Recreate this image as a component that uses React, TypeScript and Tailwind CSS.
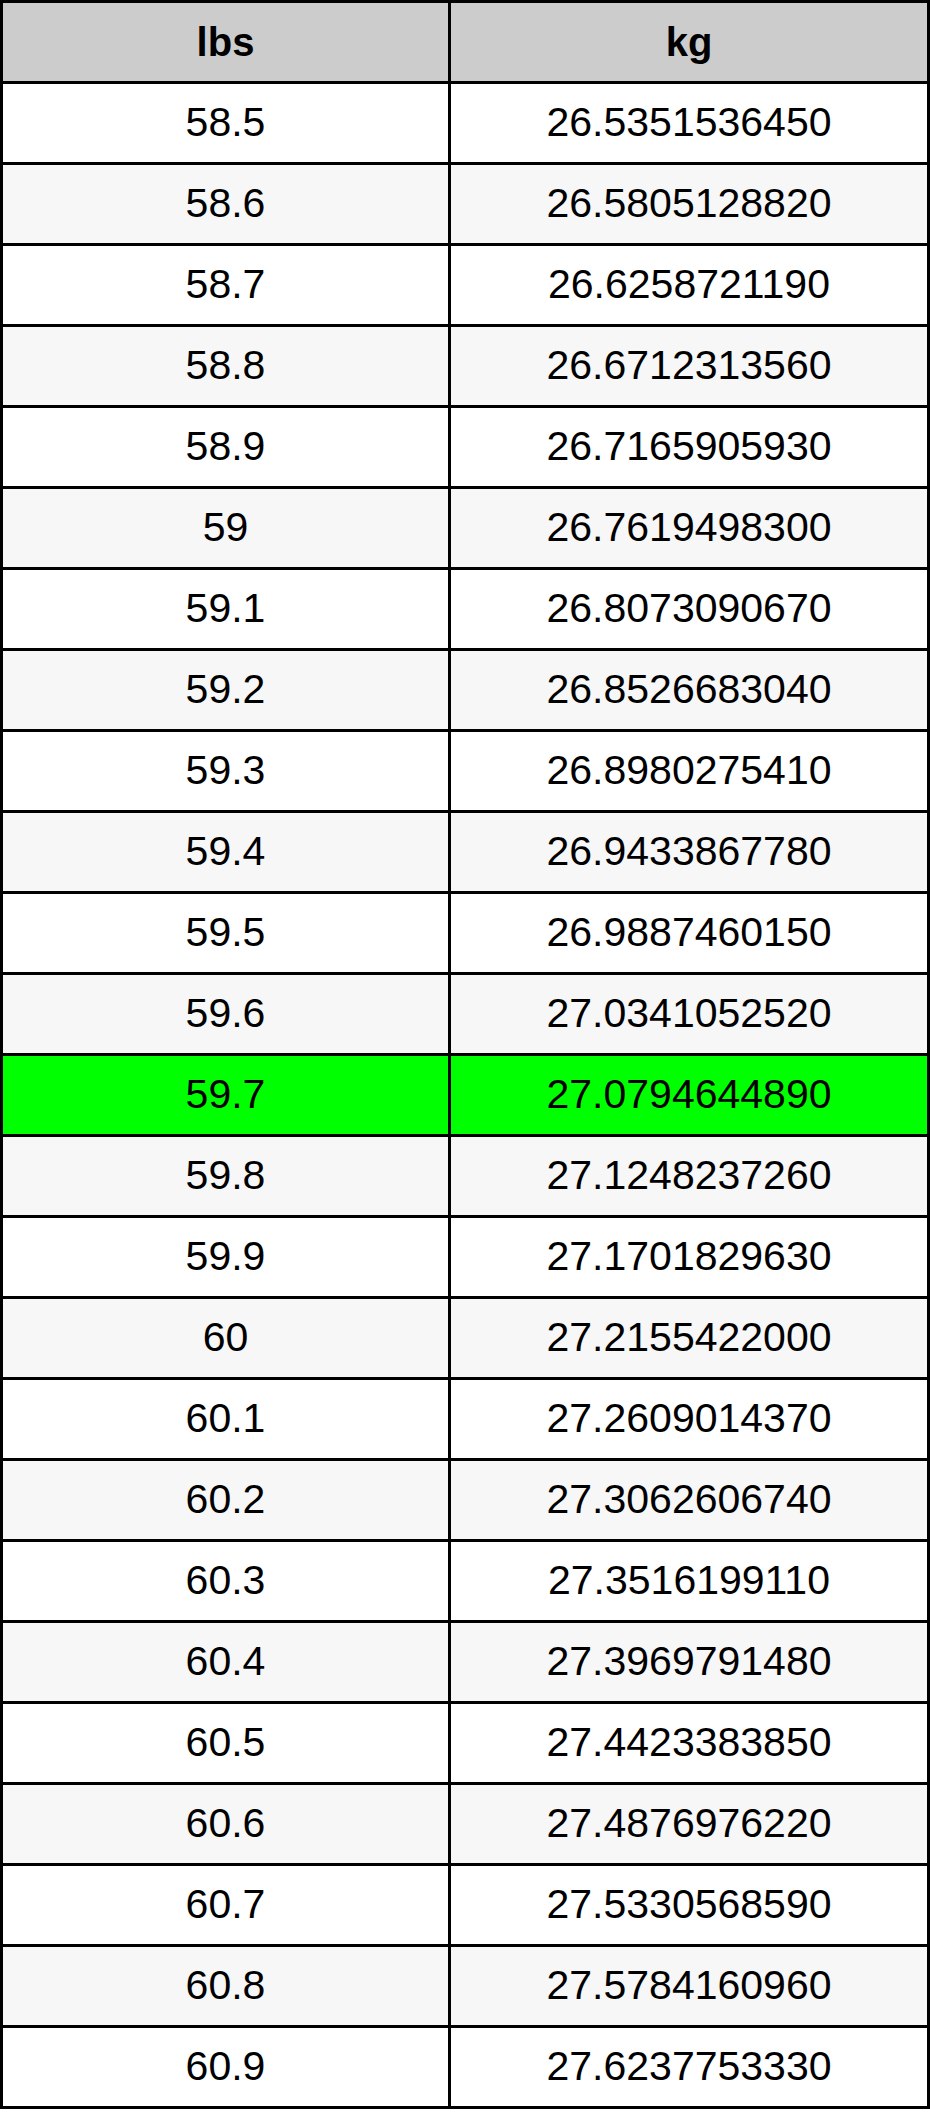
import React from 'react';

const ROWS: [string, string][] = [
  ['58.5', '26.5351536450'],
  ['58.6', '26.5805128820'],
  ['58.7', '26.6258721190'],
  ['58.8', '26.6712313560'],
  ['58.9', '26.7165905930'],
  ['59', '26.7619498300'],
  ['59.1', '26.8073090670'],
  ['59.2', '26.8526683040'],
  ['59.3', '26.8980275410'],
  ['59.4', '26.9433867780'],
  ['59.5', '26.9887460150'],
  ['59.6', '27.0341052520'],
  ['59.7', '27.0794644890'],
  ['59.8', '27.1248237260'],
  ['59.9', '27.1701829630'],
  ['60', '27.2155422000'],
  ['60.1', '27.2609014370'],
  ['60.2', '27.3062606740'],
  ['60.3', '27.3516199110'],
  ['60.4', '27.3969791480'],
  ['60.5', '27.4423383850'],
  ['60.6', '27.4876976220'],
  ['60.7', '27.5330568590'],
  ['60.8', '27.5784160960'],
  ['60.9', '27.6237753330'],
];

const HIGHLIGHT = '59.7';

export default function App() {
  return (
    <div className="w-[930px] bg-white" style={{ fontFamily: '"Liberation Sans", Arial, sans-serif' }}>
      <div className="border-[3px] border-black">
        {/* header */}
        <div className="grid grid-cols-[448px_1fr] h-[78px] bg-[#cccccc] text-black font-bold text-[40px]">
          <div className="flex items-center justify-center border-r-[3px] border-black">lbs</div>
          <div className="flex items-center justify-center">kg</div>
        </div>

        {ROWS.map(([lbs, kg], i) => {
          const bg = lbs === HIGHLIGHT ? 'bg-[#00ff00]' : i % 2 === 0 ? 'bg-white' : 'bg-[#f7f7f7]';
          return (
            <div key={lbs} className={`grid grid-cols-[448px_1fr] h-[81px] border-t-[3px] border-black text-[41px] text-black ${bg}`}>
              <div className="flex items-center justify-center border-r-[3px] border-black">{lbs}</div>
              <div className="flex items-center justify-center">{kg}</div>
            </div>
          );
        })}
      </div>
    </div>
  );
}
